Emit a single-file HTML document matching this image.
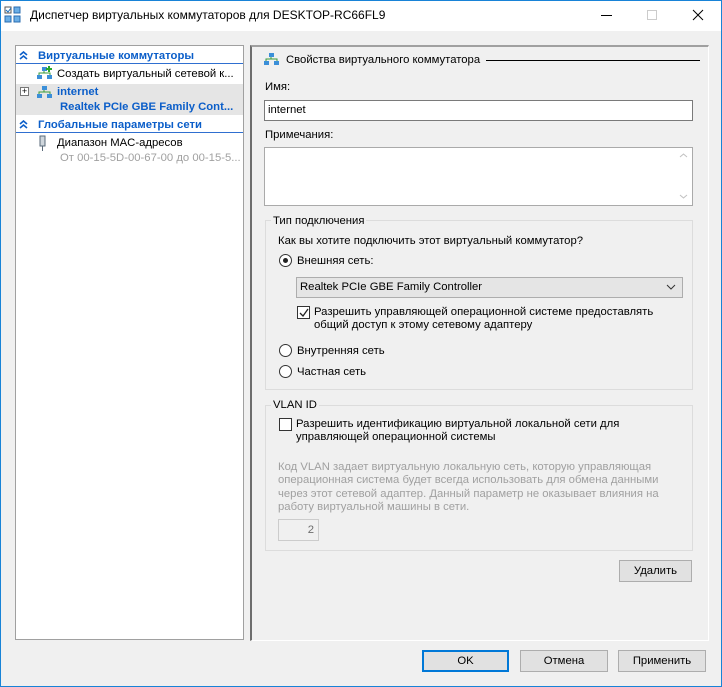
<!DOCTYPE html>
<html><head><meta charset="utf-8"><style>
*{margin:0;padding:0;box-sizing:border-box}
body{width:722px;height:687px;background:#f0f0f0;font-family:"Liberation Sans",sans-serif;font-size:11.3px;color:#000;position:relative;overflow:hidden}
.a{position:absolute;white-space:nowrap;line-height:15px}
.win{position:absolute;left:0;top:0;width:722px;height:687px;border:1px solid #1883d7}
.title{position:absolute;left:1px;top:1px;width:720px;height:30px;background:#fff}
.blue{color:#0b5ec9;font-weight:bold}
.box{position:absolute;border:1px solid #dcdcdc}
.btn{position:absolute;height:22px;background:#e1e1e1;border:1px solid #adadad;text-align:center;line-height:20px}
.radio{position:absolute;width:13px;height:13px;border:1px solid #333;border-radius:50%;background:#fff}
.chk{position:absolute;width:13px;height:13px;border:1px solid #333;background:#fff}
.gray{color:#a0a0a0}
</style></head><body>
<div class="title"></div>
<div class="win"></div>
<svg class="a" style="left:4px;top:6px" width="18" height="18" viewBox="0 0 18 18"><rect x="1" y="1" width="6" height="6" fill="#fff" stroke="#555"/><path d="M2 4l2 2 3-4" stroke="#1a6fc0" fill="none"/><rect x="10" y="1" width="6" height="6" fill="#6aaee6" stroke="#2a6cb0"/><rect x="1" y="10" width="6" height="6" fill="#6aaee6" stroke="#2a6cb0"/><rect x="10" y="10" width="6" height="6" fill="#6aaee6" stroke="#2a6cb0"/></svg>
<div class="a" style="left:30px;top:8px;font-size:12px">Диспетчер виртуальных коммутаторов для DESKTOP-RC66FL9</div>
<div class="a" style="left:601px;top:15px;width:11px;height:1px;background:#000"></div>
<div class="a" style="left:647px;top:10px;width:10px;height:10px;border:1px solid #ccc"></div>
<svg class="a" style="left:692px;top:9px" width="12" height="12"><path d="M1 1L11 11M11 1L1 11" stroke="#000"/></svg>

<div class="a" style="left:15px;top:45px;width:229px;height:595px;background:#fff;border:1px solid #a0a0a0"></div>
<svg class="a" style="left:19px;top:51px" width="9" height="9"><path d="M1 4l3.5-3 3.5 3M1 8l3.5-3 3.5 3" stroke="#0b5ec9" stroke-width="1.6" fill="none"/></svg>
<div class="a" style="left:16px;top:63px;width:227px;height:1px;background:#2f6fd0"></div>
<div class="a blue" style="left:38px;top:49px">Виртуальные коммутаторы</div>
<svg class="a" style="left:36px;top:66px" width="17" height="14"><rect x="6" y="1" width="5" height="4" fill="#3b8fd8"/><rect x="1" y="9" width="5" height="4" fill="#3b8fd8"/><rect x="11" y="9" width="5" height="4" fill="#3b8fd8"/><path d="M3 9V7h11v2M8 5v2" stroke="#3a9a3a" fill="none"/><path d="M13 0v6M10 3h6" stroke="#2aa82a" stroke-width="2"/></svg>
<div class="a" style="left:57px;top:67px">Создать виртуальный сетевой к...</div>
<div class="a" style="left:16px;top:84px;width:227px;height:31px;background:#e5e5e5"></div>
<div class="a" style="left:20px;top:87px;width:9px;height:9px;border:1px solid #777;background:#fff;font-size:9px;line-height:7px;text-align:center">+</div>
<svg class="a" style="left:36px;top:85px" width="17" height="14"><rect x="6" y="1" width="5" height="4" fill="#3b8fd8"/><rect x="1" y="9" width="5" height="4" fill="#3b8fd8"/><rect x="11" y="9" width="5" height="4" fill="#3b8fd8"/><path d="M3 9V7h11v2M8 5v2" stroke="#3a9a3a" fill="none"/></svg>
<div class="a blue" style="left:57px;top:85px">internet</div>
<div class="a blue" style="left:60px;top:100px">Realtek PCIe GBE Family Cont...</div>
<svg class="a" style="left:19px;top:120px" width="9" height="9"><path d="M1 4l3.5-3 3.5 3M1 8l3.5-3 3.5 3" stroke="#0b5ec9" stroke-width="1.6" fill="none"/></svg>
<div class="a" style="left:16px;top:132px;width:227px;height:1px;background:#2f6fd0"></div>
<div class="a blue" style="left:38px;top:118px">Глобальные параметры сети</div>
<svg class="a" style="left:38px;top:135px" width="10" height="17"><rect x="2" y="1" width="5" height="10" fill="#cfd6dc" stroke="#5a6a7a"/><path d="M4.5 11v5" stroke="#5a6a7a"/></svg>
<div class="a" style="left:57px;top:136px">Диапазон MAC-адресов</div>
<div class="a gray" style="left:60px;top:151px">От 00-15-5D-00-67-00 до 00-15-5...</div>

<div class="a" style="left:250px;top:45px;width:459px;height:596px;border-left:2px solid #6d6d6d;border-top:2px solid #a0a0a0;border-right:1px solid #fff;border-bottom:1px solid #fff"></div>
<svg class="a" style="left:263px;top:52px" width="17" height="14"><rect x="6" y="1" width="5" height="4" fill="#3b8fd8"/><rect x="1" y="9" width="5" height="4" fill="#3b8fd8"/><rect x="11" y="9" width="5" height="4" fill="#3b8fd8"/><path d="M3 9V7h11v2M8 5v2" stroke="#3a9a3a" fill="none"/></svg>
<div class="a" style="left:286px;top:53px">Свойства виртуального коммутатора</div>
<div class="a" style="left:486px;top:60px;width:214px;height:1px;background:#000"></div>
<div class="a" style="left:265px;top:80px">Имя:</div>
<div class="a" style="left:264px;top:100px;width:429px;height:21px;background:#fff;border:1px solid #7a7a7a;padding:2px 3px">internet</div>
<div class="a" style="left:265px;top:128px">Примечания:</div>
<div class="a" style="left:264px;top:147px;width:429px;height:59px;background:#fff;border:1px solid #aaa"></div>
<svg class="a" style="left:679px;top:152px" width="9" height="50"><path d="M1 5l3.5-3 3.5 3M1 43l3.5 3 3.5-3" stroke="#c0c0c0" fill="none"/></svg>

<div class="box" style="left:265px;top:220px;width:428px;height:170px"></div>
<div class="a" style="left:271px;top:214px;background:#f0f0f0;padding:0 2px">Тип подключения</div>
<div class="a" style="left:278px;top:234px">Как вы хотите подключить этот виртуальный коммутатор?</div>
<div class="radio" style="left:279px;top:254px"><div style="position:absolute;left:3px;top:3px;width:5px;height:5px;border-radius:50%;background:#222"></div></div>
<div class="a" style="left:297px;top:254px">Внешняя сеть:</div>
<div class="a" style="left:296px;top:277px;width:387px;height:21px;background:#e5e5e5;border:1px solid #adadad;padding:2px 3px">Realtek PCIe GBE Family Controller</div>
<svg class="a" style="left:666px;top:283px" width="10" height="8"><path d="M1 2l4 4 4-4" stroke="#333" fill="none"/></svg>
<div class="chk" style="left:297px;top:306px"><svg style="position:absolute;left:1px;top:1px" width="10" height="10"><path d="M1 5l3 3 5-7" stroke="#222" stroke-width="1.3" fill="none"/></svg></div>
<div class="a" style="left:314px;top:306px;line-height:13px">Разрешить управляющей операционной системе предоставлять<br>общий доступ к этому сетевому адаптеру</div>
<div class="radio" style="left:279px;top:344px"></div>
<div class="a" style="left:297px;top:344px">Внутренняя сеть</div>
<div class="radio" style="left:279px;top:365px"></div>
<div class="a" style="left:297px;top:365px">Частная сеть</div>

<div class="box" style="left:265px;top:405px;width:428px;height:146px"></div>
<div class="a" style="left:271px;top:398px;background:#f0f0f0;padding:0 2px">VLAN ID</div>
<div class="chk" style="left:279px;top:418px"></div>
<div class="a" style="left:296px;top:418px;line-height:13px">Разрешить идентификацию виртуальной локальной сети для<br>управляющей операционной системы</div>
<div class="a gray" style="left:278px;top:461px;line-height:13.3px">Код VLAN задает виртуальную локальную сеть, которую управляющая<br>операционная система будет всегда использовать для обмена данными<br>через этот сетевой адаптер. Данный параметр не оказывает влияния на<br>работу виртуальной машины в сети.</div>
<div class="a gray" style="left:278px;top:519px;width:41px;height:22px;border:1px solid #ccc;text-align:right;padding:3px 4px 0 0;color:#6d6d6d">2</div>

<div class="btn" style="left:619px;top:560px;width:73px">Удалить</div>
<div class="btn" style="left:422px;top:650px;width:87px;border:2px solid #0078d7;line-height:18px">OK</div>
<div class="btn" style="left:520px;top:650px;width:88px">Отмена</div>
<div class="btn" style="left:618px;top:650px;width:88px">Применить</div>
</body></html>
